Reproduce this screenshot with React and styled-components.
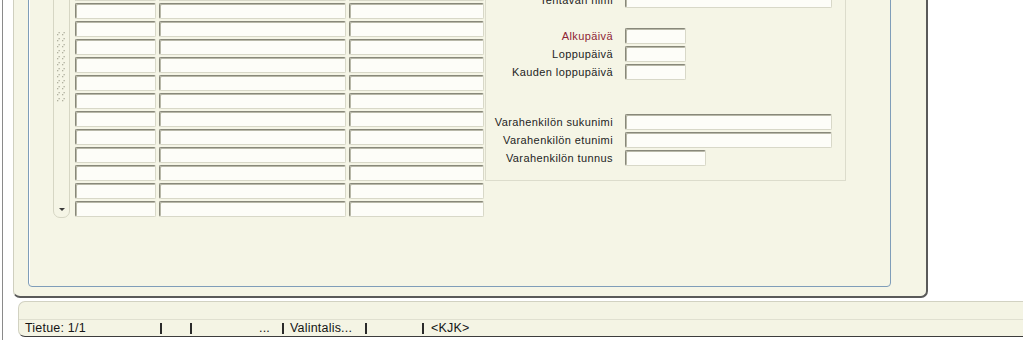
import React from 'react'
import styled, { createGlobalStyle } from 'styled-components'

const GlobalStyle = createGlobalStyle`
  html, body {
    margin: 0;
    padding: 0;
    background: #ffffff;
    overflow: hidden;
  }
  body {
    font-family: "Liberation Sans", Arial, sans-serif;
  }
`;

const Page = styled.div`
  width: 1020px;
  height: 340px;
  margin-left: 2px;
  border-left: 1px solid #8a8a8a;
  display: flex;
  flex-direction: column;
  overflow: hidden;
  background: #ffffff;
`;

const Frame = styled.div`
  box-sizing: border-box;
  margin-top: -40px;
  margin-left: 10px;
  width: 915px;
  height: 338px;
  background: #f5f5e6;
  border-left: 1px solid #cfcfbf;
  border-right: 2px solid #5a5a5a;
  border-bottom: 2px solid #5a5a5a;
  border-radius: 0 0 7px 7px;
  padding: 0 35px 9px 14px;
  display: flex;
  flex-direction: column;
`;

const Panel = styled.div`
  flex: 1;
  border: 1px solid #7f9db9;
  border-radius: 0 0 4px 4px;
  box-shadow: inset 1px 1px 0 #ffffff;
  padding: 24px 0 0 24px;
  display: flex;
  align-items: flex-start;
`;

const Scrollbar = styled.div`
  box-sizing: border-box;
  width: 17px;
  height: 233px;
  margin-right: 5px;
  border: 1px solid #d6d6c4;
  border-radius: 0 0 7px 7px;
  display: flex;
  flex-direction: column;
  align-items: center;
  justify-content: space-between;
  padding: 46px 0 4px;
`;

const Arrow = styled.div`
  width: 0;
  height: 0;
  border-left: 3px solid transparent;
  border-right: 3px solid transparent;
  border-top: 3px solid #3a3a3a;
  margin-bottom: 2px;
`;

const Table = styled.div`
  display: grid;
  grid-template-columns: 81px 187px 135px;
  column-gap: 3px;
  row-gap: 2px;
`;

const Cell = styled.div`
  box-sizing: border-box;
  height: 16px;
  width: ${p => (p.$w ? `${p.$w}px` : 'auto')};
  background: #fdfdf8;
  border: 1px solid;
  border-color: #88887a #d8d8c8 #d8d8c8 #88887a;
  box-shadow: inset 1px 1px 0 #b8b8a8;
  border-radius: 2px;
`;

const FormPanel = styled.div`
  box-sizing: border-box;
  width: 361px;
  margin-left: 1px;
  border: 1px solid #dcdccc;
  border-top: none;
  padding: 7px 0 14px;
`;

const FormGrid = styled.div`
  display: grid;
  grid-template-columns: 127px auto;
  column-gap: 12px;
  row-gap: 2px;
  align-items: center;
  justify-items: start;
`;

const Label = styled.span`
  justify-self: end;
  font-size: 11px;
  letter-spacing: 0.4px;
  line-height: 16px;
  color: ${p => (p.$required ? '#8e2535' : '#1e1e1e')};
  white-space: nowrap;
`;

const Spacer = styled.div`
  grid-column: 1 / -1;
  height: ${p => p.$h}px;
`;

const StatusBar = styled.div`
  box-sizing: border-box;
  margin: 3px 0 0 15px;
  height: 36px;
  background: #f4f4e4;
  border: 1px solid #d2d2c2;
  border-right: none;
  border-bottom: 1px solid #3c3c3c;
  border-radius: 7px 0 0 7px;
  display: flex;
  flex-direction: column;
`;

const StatusTop = styled.div`
  height: 17px;
  border-bottom: 1px solid #e0e0d0;
`;

const StatusRow = styled.div`
  flex: 1;
  display: flex;
  align-items: center;
  padding-left: 6px;
  font-size: 12.5px;
  letter-spacing: 0.2px;
  color: #151515;
`;

const StatusCell = styled.div`
  width: ${p => (p.$w ? `${p.$w}px` : 'auto')};
  text-align: ${p => p.$align || 'left'};
  padding: ${p => p.$pad || '0'};
  box-sizing: border-box;
  white-space: nowrap;
`;

const Sep = styled.span`
  display: inline-block;
  width: 2px;
  height: 11px;
  background: #2a2a2a;
`;

const Grip = () => (
  <svg width="11" height="72" viewBox="0 0 11 72">
    {Array.from({ length: 12 }).map((_, i) => (
      <g key={i} fill="#b0b09e">
        <rect x="1" y={i * 6 + 2} width="1.3" height="1.3" />
        <rect x="2.5" y={i * 6} width="1.3" height="1.3" />
        <rect x="6" y={i * 6 + 2} width="1.3" height="1.3" />
        <rect x="7.5" y={i * 6} width="1.3" height="1.3" />
      </g>
    ))}
  </svg>
);

const rows = Array.from({ length: 13 });

const App = () => {
  return (
    <>
      <GlobalStyle />
      <Page>
        <Frame>
          <Panel>
            <Scrollbar>
              <Grip />
              <Arrow />
            </Scrollbar>
            <Table>
              {rows.map((_, i) => (
                <React.Fragment key={i}>
                  <Cell />
                  <Cell />
                  <Cell />
                </React.Fragment>
              ))}
            </Table>
            <FormPanel>
              <FormGrid>
                <Label>Tentavan nimi</Label>
                <Cell $w={207} />
                <Spacer $h={16} />
                <Label $required>Alkupäivä</Label>
                <Cell $w={61} />
                <Label>Loppupäivä</Label>
                <Cell $w={61} />
                <Label>Kauden loppupäivä</Label>
                <Cell $w={61} />
                <Spacer $h={30} />
                <Label>Varahenkilön sukunimi</Label>
                <Cell $w={207} />
                <Label>Varahenkilön etunimi</Label>
                <Cell $w={207} />
                <Label>Varahenkilön tunnus</Label>
                <Cell $w={81} />
              </FormGrid>
            </FormPanel>
          </Panel>
        </Frame>
        <StatusBar>
          <StatusTop />
          <StatusRow>
            <StatusCell $w={135}>Tietue: 1/1</StatusCell>
            <Sep />
            <StatusCell $w={28} />
            <Sep />
            <StatusCell $w={90} $align="right" $pad="0 12px 0 0">...</StatusCell>
            <Sep />
            <StatusCell $w={81} $pad="0 0 0 6px">Valintalis...</StatusCell>
            <Sep />
            <StatusCell $w={55} />
            <Sep />
            <StatusCell $pad="0 0 0 7px">&lt;KJK&gt;</StatusCell>
          </StatusRow>
        </StatusBar>
      </Page>
    </>
  )
}

export default App;
